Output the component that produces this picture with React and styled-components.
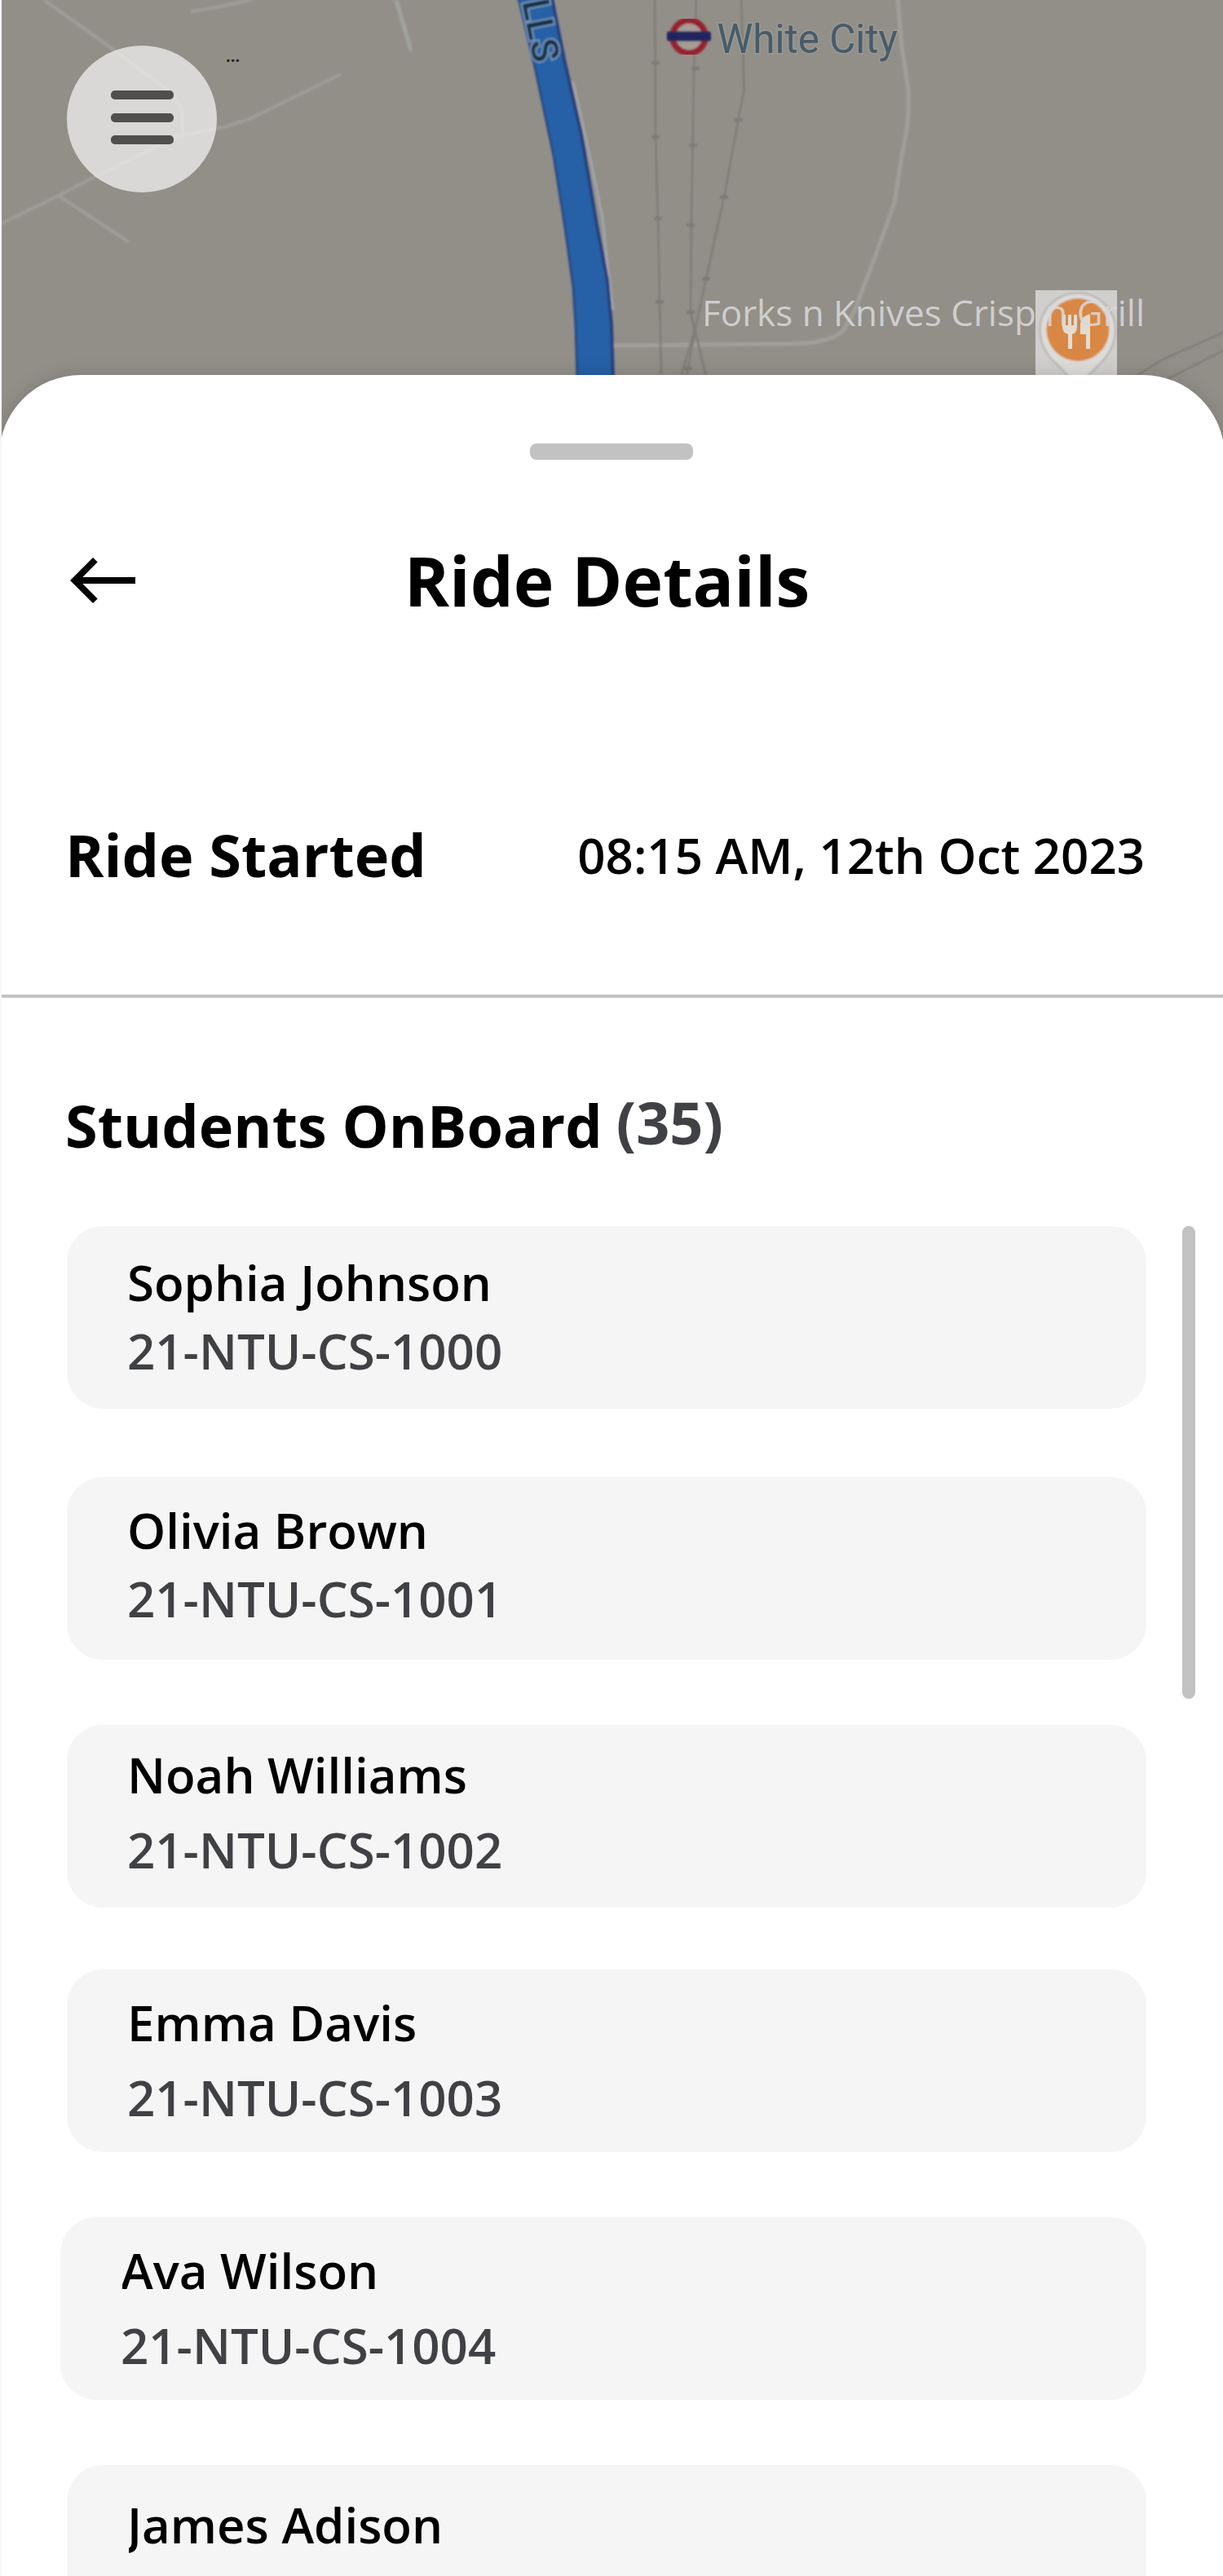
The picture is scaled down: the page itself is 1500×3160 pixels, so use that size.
import React from 'react';
import styled, { createGlobalStyle } from 'styled-components';

const GlobalStyle = createGlobalStyle`
  * { box-sizing: border-box; }
  body {
    margin: 0;
    background: #fff;
    font-family: "Open Sans", "Noto Sans", sans-serif;
    color: #000;
  }
`;

const Screen = styled.main`
  display: flex;
  flex-direction: column;
  width: 1500px;
  height: 3160px;
  overflow: hidden;
`;

const MapArea = styled.section`
  position: relative;
  flex: none;
  height: 560px;
  border-left: 2px solid #fff;
  background: #928f89;
  overflow: hidden;
`;

const MapDrawing = styled.svg`
  display: block;
  width: 1500px;
  height: 560px;
  margin-left: -2px;
`;

const MenuButton = styled.button`
  position: absolute;
  left: 80px;
  top: 56px;
  width: 184px;
  height: 180px;
  padding: 0 0 4px;
  border: 0;
  border-radius: 50%;
  background: rgba(255, 255, 255, 0.65);
  display: flex;
  flex-direction: column;
  align-items: center;
  justify-content: center;
  gap: 16.5px;
`;

const MenuBar = styled.span`
  width: 77px;
  height: 11px;
  border-radius: 5px;
  background: #4f4f4f;
`;

const Dots = styled.span`
  position: absolute;
  left: 275px;
  top: 56px;
  font-size: 20px;
  font-weight: 700;
  line-height: 26px;
  color: #222;
`;

const PlaceLabel = styled.span`
  position: absolute;
  right: 96px;
  top: 353px;
  font-size: 44px;
  line-height: 60px;
  white-space: nowrap;
  color: rgba(216, 216, 216, 0.88);
`;

const Sheet = styled.section`
  position: relative;
  flex: none;
  display: flex;
  flex-direction: column;
  width: 1503px;
  height: 2700px;
  margin: -100px 0 0 -1px;
  padding: 84px 2px 0 3px;
  border-radius: 100px 100px 0 0;
  background: linear-gradient(90deg, #f8f8f8 3px, #fff 3px);
  box-shadow: 0 0 24px rgba(0, 0, 0, 0.14);
`;

const Handle = styled.div`
  flex: none;
  align-self: center;
  width: 200px;
  height: 20px;
  margin-right: 2px;
  border-radius: 8px;
  background: #c2c2c2;
`;

const Header = styled.header`
  flex: none;
  display: grid;
  grid-template-columns: 81px 1fr 96px;
  align-items: center;
  margin-top: 90px;
  padding: 0 82px 0 84px;
  height: 116px;
`;

const BackButton = styled.button`
  padding: 0;
  border: 0;
  background: none;
  display: flex;
`;

const Title = styled.h1`
  margin: 0;
  text-align: center;
  font-size: 84px;
  font-weight: 700;
  line-height: 116px;
`;

const StartRow = styled.div`
  flex: none;
  display: flex;
  justify-content: space-between;
  align-items: flex-start;
  margin-top: 229px;
  height: 98px;
  padding: 0 96px 0 78px;
`;

const SectionTitle = styled.h2`
  margin: 0;
  font-size: 72px;
  font-weight: 700;
  line-height: 98px;
`;

const StartTime = styled.time`
  margin-top: 9px;
  font-size: 60px;
  font-weight: 600;
  line-height: 82px;
`;

const Divider = styled.hr`
  flex: none;
  width: 100%;
  height: 4px;
  margin: 123px 0 107px;
  border: 0;
  background: #c2c2c2;
`;

const StudentsHeading = styled.div`
  flex: none;
  display: flex;
  align-items: flex-start;
  height: 98px;
  padding-left: 78px;
`;

const Count = styled.span`
  margin: -4px 0 0 17px;
  font-size: 72px;
  font-weight: 700;
  line-height: 98px;
  color: #404144;
`;

const ListRow = styled.div`
  flex: none;
  display: flex;
  align-items: flex-start;
  justify-content: space-between;
  margin-top: 75px;
  padding: 0 34px 0 72px;
`;

const List = styled.ul`
  list-style: none;
  width: 1332px;
  margin: 0;
  padding: 0;
  display: flex;
  flex-direction: column;
  align-items: flex-end;
`;

const Card = styled.li`
  width: ${(p) => (p.$wide ? 1332 : 1324)}px;
  height: 224px;
  margin-bottom: ${(p) => p.$after}px;
  padding: ${(p) => p.$top}px 40px 0 74px;
  border-radius: 44px;
  background: #f5f5f5;
  display: flex;
  flex-direction: column;
  gap: ${(p) => p.$gap}px;
`;

const Name = styled.span`
  font-size: 60px;
  font-weight: 600;
  line-height: 84px;
  clip-path: inset(0 0 0 2px);
`;

const StudentId = styled(Name)`
  color: #404144;
`;

const ScrollThumb = styled.div`
  width: 16px;
  height: 580px;
  border-radius: 8px;
  background: #c2c2c2;
`;

const students = [
  { name: 'Sophia Johnson', id: '21-NTU-CS-1000', top: 27, gap: 0, after: 84 },
  { name: 'Olivia Brown', id: '21-NTU-CS-1001', top: 23, gap: 0, after: 80 },
  { name: 'Noah Williams', id: '21-NTU-CS-1002', top: 19, gap: 8, after: 76 },
  { name: 'Emma Davis', id: '21-NTU-CS-1003', top: 23, gap: 8, after: 80 },
  { name: 'Ava Wilson', id: '21-NTU-CS-1004', top: 23, gap: 8, after: 80, wide: true },
  { name: 'James Adison', id: '', top: 31, gap: 8, after: 0 },
];

const railNodes = [
  [804, 77], [804, 168], [807, 268], [809, 370],
  [853, 84], [850, 178], [847, 276], [847, 383],
  [905.5, 147], [888, 242], [866, 342], [844, 452],
];

function MapPicture() {
  return (
    <MapDrawing viewBox="0 0 1500 560" aria-hidden="true">
      <defs>
        <filter id="soft" x="-5%" y="-5%" width="110%" height="110%">
          <feGaussianBlur stdDeviation="1" />
        </filter>
        <clipPath id="pinTile">
          <rect x="1270" y="356" width="100" height="110" />
        </clipPath>
      </defs>

      <g filter="url(#soft)" fill="none" strokeLinejoin="round">
        <g stroke="#9f9d97" strokeWidth="4">
          <path d="M54 0 127 52 143 64 201 107Q220 122 223 136L224 166" />
          <path d="M0 275 72 240 120 215 191 180Q206 168 230 165L275 156 308 145 418 91" />
          <path d="M72 240 158 297" />
          <path d="M234 14 276 7 311 -1" />
          <path d="M486 0 504 62" stroke="#a1a39d" strokeWidth="5" />
        </g>
        <path
          d="M1101 -2 1106 57 1114 110Q1115 140 1112 160L1106 191 1097 249 1075 310 1049 379 1036 403Q1030 411 1018 415L999 420Q980 422 940 422L750 424"
          stroke="#a09f98"
          strokeWidth="5"
        />
        <path d="M703 100 722 185 739 268 745 325 752 380" stroke="#a3a6ab" strokeWidth="3" />
        <g stroke="#7e7b75" strokeWidth="2.4">
          <path d="M803 -2 804 168 807 268 811 462" />
          <path d="M854 -2 851 88 848 275 847 383 854 412 866 462" />
          <path d="M909 -2 912.6 111 905.5 147 888 242 866 342 853 402 842 462" />
          <path d="M847 383 852 405 835 462" />
          <path d="M1390 464 1424 442 1502 407" />
          <path d="M1418 472 1502 429" />
        </g>
        <g stroke="#7d7a75" strokeWidth="4">
          {railNodes.map(([x, y]) => (
            <path key={`${x}-${y}`} d={`M${x - 5} ${y}h10`} />
          ))}
        </g>
        <path
          d="M636 -2 656 82 679 191 693 279 703 352 706 400 708 465H752L750 400 745 344 732 276 713 165 692 73 677 -2Z"
          fill="#2860a6"
        />
        <path d="M636 -2 656 82 679 191 693 279 703 352 706 400 708 465" stroke="#2b4b86" strokeWidth="3" />
        <path d="M677 -2 692 73 713 165 732 276 745 344 750 400 752 465" stroke="#27407f" strokeWidth="4" />
      </g>

      <g filter="url(#soft)">
        <text
          transform="translate(655 78) rotate(79)"
          textAnchor="end"
          fontFamily="Roboto, sans-serif"
          fontSize="46"
          fontWeight="500"
          fill="#15304a"
          stroke="#6f8fb2"
          strokeWidth="5"
          paintOrder="stroke"
        >
          LLS
        </text>
      </g>

      <g filter="url(#soft)">
        <circle cx="845" cy="45" r="20" fill="#a39c97" stroke="#97222d" strokeWidth="7.500" />
        <rect x="818" y="38.5" width="54" height="12" rx="3" fill="#23275e" />
      </g>
      <text
        x="879.500"
        y="65"
        fontFamily="Roboto, sans-serif"
        fontSize="49.400"
        fill="#475c6a"
        stroke="#9a9893"
        strokeWidth="3"
        paintOrder="stroke"
      >
        White City
      </text>

      <g clipPath="url(#pinTile)">
        <rect x="1270" y="356" width="100" height="110" fill="#d0cfcd" />
        <g filter="url(#soft)">
          <path
            d="M1322 359.5C1296 359.5 1275.500 380 1275.500 404C1275.500 420 1282 432 1291 442L1317 468H1328L1353 442C1362 432 1368 420 1368 404C1368 380 1348 359.500 1322 359.500Z"
            fill="#dddcd9"
            stroke="#bab9b7"
            strokeWidth="2.500"
          />
          <circle cx="1322" cy="404.500" r="38.500" fill="#d98745" />
        </g>
        <g fill="#e2dcd0">
          <path d="M1303 386h4v13h3v-13h4v13h3v-13h4v15q0 7-6 9v18h-5v-18q-7-2-7-9z" />
          <path d="M1337 385v43h-5v-18h-7v-13q1-9 12-12z" />
        </g>
      </g>
    </MapDrawing>
  );
}

export default function App() {
  return (
    <>
      <GlobalStyle />
      <Screen>
        <MapArea>
          <MapPicture />
          <MenuButton aria-label="Menu">
            <MenuBar />
            <MenuBar />
            <MenuBar />
          </MenuButton>
          <Dots>...</Dots>
          <PlaceLabel>Forks n Knives Crisp n Grill</PlaceLabel>
        </MapArea>
        <Sheet>
          <Handle />
          <Header>
            <BackButton aria-label="Back">
              <svg width="80" height="56" viewBox="0 0 80 56">
                <path d="M28 0 33.600 5.600 15.300 24H80V32H15.300L33.600 50.400 28 56 0 28Z" />
              </svg>
            </BackButton>
            <Title>Ride Details</Title>
          </Header>
          <StartRow>
            <SectionTitle>Ride Started</SectionTitle>
            <StartTime>08:15 AM, 12th Oct 2023</StartTime>
          </StartRow>
          <Divider />
          <StudentsHeading>
            <SectionTitle>Students OnBoard</SectionTitle>
            <Count>(35)</Count>
          </StudentsHeading>
          <ListRow>
            <List>
              {students.map((s) => (
                <Card key={s.name} $wide={s.wide} $top={s.top} $gap={s.gap} $after={s.after}>
                  <Name>{s.name}</Name>
                  {s.id && <StudentId>{s.id}</StudentId>}
                </Card>
              ))}
            </List>
            <ScrollThumb />
          </ListRow>
        </Sheet>
      </Screen>
    </>
  );
}
